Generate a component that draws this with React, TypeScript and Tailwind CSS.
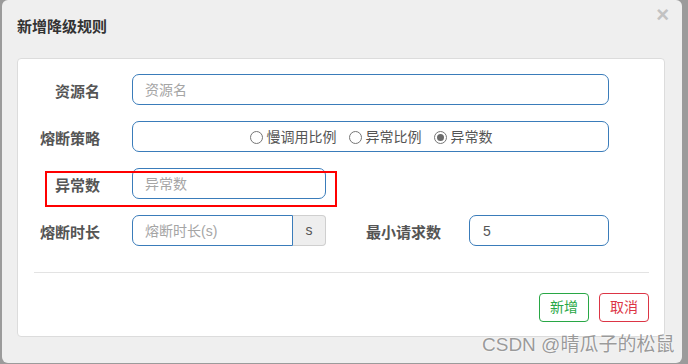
const font = {
  fontFamily: '"Liberation Sans", "Noto Sans CJK SC", sans-serif',
};

function Radio({ label, checked }: { label: string; checked?: boolean }) {
  return (
    <span className="flex items-center gap-[4px]">
      <span className="flex h-[13px] w-[13px] items-center justify-center rounded-full border border-[#767676] bg-white">
        {checked && <span className="h-[7px] w-[7px] rounded-full bg-[#6b6b6b]" />}
      </span>
      <span className="text-[14px] text-[#555]">{label}</span>
    </span>
  );
}

export default function App() {
  return (
    <div className="relative h-[364px] w-[688px] overflow-hidden bg-[#9b9b9b]" style={font}>
      <div className="ml-[2px] h-[363px] w-[680px] rounded-[6px] bg-[#efefef]">
        <header className="relative h-[58px] pl-[15px] pt-[16px]">
          <h1 className="text-[15px] font-bold leading-[22px] text-[#333]">新增降级规则</h1>
          <span className="absolute right-[13px] top-[3px] text-[22px] font-bold leading-[24px] text-[#c2c2c2]">
            ×
          </span>
        </header>

        <section className="ml-[15px] w-[648px] rounded-[4px] border border-[#dcdcdc] bg-white pb-[14px] pt-[15px]">
          <div className="flex flex-col gap-[16px]">
            <div className="flex h-[31px] items-center">
              <label className="mt-[5px] w-[82px] text-right text-[15px] font-bold text-[#555]">资源名</label>
              <input
                placeholder="资源名"
                className="ml-[32px] h-[31px] w-[477px] rounded-[7px] border border-[#3a7cba] px-[12px] text-[14px] text-[#555] outline-none placeholder:text-[#a5a5a5]"
              />
            </div>

            <div className="flex h-[31px] items-center">
              <label className="mt-[5px] w-[82px] text-right text-[15px] font-bold text-[#555]">熔断策略</label>
              <div className="ml-[32px] flex h-[31px] w-[477px] items-center justify-center gap-[12px] rounded-[7px] border border-[#3a7cba] pl-[1px] pt-[1px]">
                <Radio label="慢调用比例" />
                <Radio label="异常比例" />
                <Radio label="异常数" checked />
              </div>
            </div>

            <div className="relative flex h-[31px] items-center">
              <label className="mt-[5px] w-[82px] text-right text-[15px] font-bold text-[#555]">异常数</label>
              <input
                placeholder="异常数"
                className="ml-[32px] h-[31px] w-[194px] rounded-[7px] border border-[#3a7cba] px-[12px] text-[14px] text-[#555] outline-none placeholder:text-[#a5a5a5]"
              />
              <div className="absolute left-[27px] top-[3px] h-[36px] w-[292px] border-2 border-[#f00]" />
            </div>

            <div className="flex h-[31px] items-center">
              <label className="mt-[5px] w-[82px] text-right text-[15px] font-bold text-[#555]">熔断时长</label>
              <div className="ml-[32px] flex h-[31px] w-[194px]">
                <input
                  placeholder="熔断时长(s)"
                  className="h-[31px] w-[161px] rounded-l-[7px] border border-[#3a7cba] px-[12px] text-[14px] text-[#555] outline-none placeholder:text-[#a5a5a5]"
                />
                <span className="flex h-[31px] w-[33px] items-center justify-center rounded-r-[4px] border border-l-0 border-[#cfcfcf] bg-[#eeeeee] text-[14px] text-[#555]">
                  s
                </span>
              </div>
              <label className="mt-[5px] w-[115px] text-right text-[15px] font-bold text-[#555]">最小请求数</label>
              <input
                defaultValue="5"
                className="ml-[28px] h-[31px] w-[140px] rounded-[7px] border border-[#3a7cba] px-[13px] text-[14px] text-[#555] outline-none"
              />
            </div>
          </div>

          <div className="ml-[16px] mr-[15px] mt-[26px] h-px bg-[#e3e3e3]" />

          <div className="mr-[15px] mt-[20px] flex justify-end gap-[10px]">
            <button className="h-[29px] w-[50px] rounded-[4px] border border-[#28a745] bg-white text-[14px] text-[#28a745]">
              新增
            </button>
            <button className="h-[29px] w-[50px] rounded-[4px] border border-[#dc3545] bg-white text-[14px] text-[#dc3545]">
              取消
            </button>
          </div>
        </section>
      </div>

      <span
        className="absolute left-[482px] top-[333px] text-[19px] leading-[24px] text-[#9a9a9a]"
        style={{ textShadow: "0 0 2px #fff, 0 0 1px #fff" }}
      >
        CSDN @晴瓜子的松鼠
      </span>
    </div>
  );
}
